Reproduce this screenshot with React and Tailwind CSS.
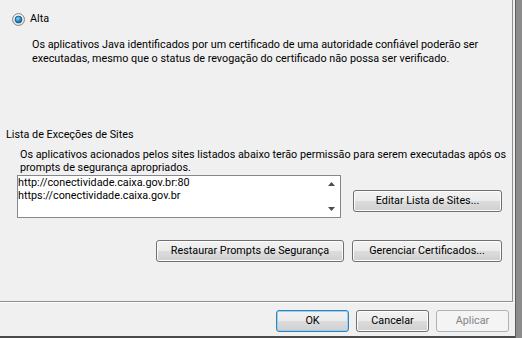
import React from "react";

// botão estilo Windows 7
const WinButton = ({ children, width, variant = "normal" }) => {
  const styles = {
    normal:
      "border-[#707070] text-black bg-[linear-gradient(to_bottom,#f2f2f2_0%,#ebebeb_50%,#dddddd_50%,#cfcfcf_100%)] shadow-[inset_0_0_0_1px_#fcfcfc]",
    default:
      "border-[#3c7fb1] text-black bg-[linear-gradient(to_bottom,#f2f2f2_0%,#ebebeb_50%,#dddddd_50%,#cfcfcf_100%)] shadow-[inset_0_0_0_1px_#8fd3f7]",
    disabled: "border-[#adb2b5] text-[#838383] bg-[#f4f4f4]",
  };
  return (
    <button
      className={`h-[22px] ${width} rounded-[3px] border flex items-center justify-center leading-none whitespace-nowrap ${styles[variant]}`}
    >
      {children}
    </button>
  );
};

const Radio = () => (
  <svg width="13" height="13" viewBox="0 0 13 13">
    <defs>
      <radialGradient id="ring" cx="50%" cy="35%" r="70%">
        <stop offset="0%" stopColor="#ffffff" />
        <stop offset="100%" stopColor="#d4d4d4" />
      </radialGradient>
      <radialGradient id="dot" cx="40%" cy="35%" r="70%">
        <stop offset="0%" stopColor="#7fd8ff" />
        <stop offset="55%" stopColor="#2a8fd0" />
        <stop offset="100%" stopColor="#114d80" />
      </radialGradient>
    </defs>
    <circle cx="6.5" cy="6.5" r="6" fill="url(#ring)" stroke="#8a8a8a" />
    <circle cx="6.5" cy="6.5" r="3.4" fill="url(#dot)" stroke="#1e4f78" strokeWidth="0.8" />
  </svg>
);

const ListBox = () => (
  <div className="w-[324px] h-[43px] border border-[#828790] bg-white flex">
    <div className="flex-1 leading-[13px] whitespace-nowrap">
      <div>http://conectividade.caixa.gov.br:80</div>
      <div>https://conectividade.caixa.gov.br</div>
    </div>
    {/* scrollbar */}
    <div className="w-[17px] flex flex-col items-center justify-between py-[6px]">
      <svg width="7" height="4" viewBox="0 0 7 4">
        <path d="M0 4 L3.5 0 L7 4 Z" fill="#4d4d4d" />
      </svg>
      <svg width="7" height="4" viewBox="0 0 7 4">
        <path d="M0 0 L7 0 L3.5 4 Z" fill="#4d4d4d" />
      </svg>
    </div>
  </div>
);

export default function App() {
  return (
    <div className="w-[522px] h-[338px] bg-[#f0f0f0] flex font-['Roboto',sans-serif] text-[10.8px] text-black overflow-hidden">
      <div className="w-[515px] flex flex-col">
        {/* painel da aba */}
        <div className="w-[513px] h-[302px] border-r border-b border-[#8e8f8f] flex flex-col whitespace-nowrap">
          <div className="mt-[12px] pl-[12px] flex items-center gap-[5px] h-[14px]">
            <Radio />
            <span className="leading-[14px]">Alta</span>
          </div>
          <div className="mt-[12px] pl-[32px] leading-[14px]">
            <p>Os aplicativos Java identificados por um certificado de uma autoridade confiável poderão ser</p>
            <p>executadas, mesmo que o status de revogação do certificado não possa ser verificado.</p>
          </div>

          <div className="mt-[62px] pl-[6px] leading-[14px]">Lista de Exceções de Sites</div>
          <div className="mt-[6px] pl-[20px] leading-[13px]">
            <p>Os aplicativos acionados pelos sites listados abaixo terão permissão para serem executadas após os</p>
            <p>prompts de segurança apropriados.</p>
          </div>

          <div className="mt-px pl-[17px] pr-[10px] flex items-start justify-between">
            <ListBox />
            <div className="mt-[15px]">
              <WinButton width="w-[149px]">Editar Lista de Sites...</WinButton>
            </div>
          </div>

          <div className="mt-[22px] pr-[10px] flex justify-end gap-[8px]">
            <WinButton width="w-[188px]">Restaurar Prompts de Segurança</WinButton>
            <WinButton width="w-[150px]">Gerenciar Certificados...</WinButton>
          </div>
        </div>
        <div className="w-[514px] h-px bg-white" />

        {/* botões do diálogo */}
        <div className="flex-1 pt-[7px] pr-[6px] flex justify-end items-start gap-[7px]">
          <WinButton width="w-[73px]" variant="default">OK</WinButton>
          <WinButton width="w-[73px]">Cancelar</WinButton>
          <WinButton width="w-[73px]" variant="disabled">Aplicar</WinButton>
        </div>
        <div className="h-[2px] bg-[#4a4a4a]" />
      </div>
      {/* moldura da janela */}
      <div className="w-[7px] border-l border-[#5c5c5c] bg-[#8c8c8c]" />
    </div>
  );
}
